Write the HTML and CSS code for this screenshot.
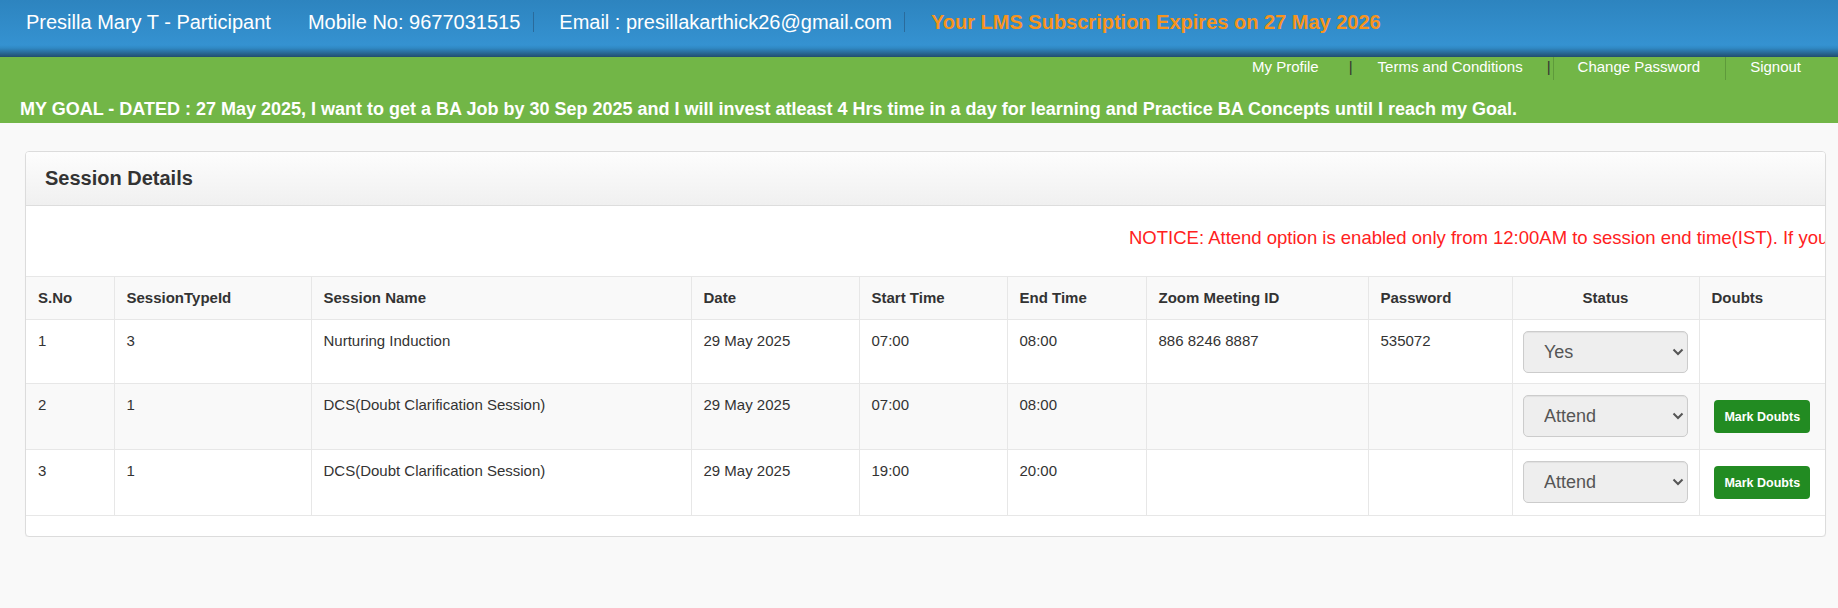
FILE: index.html
```html
<!DOCTYPE html>
<html lang="en">
<head>
<meta charset="utf-8">
<title>Session Details</title>
<link rel="stylesheet" href="styles.css">
</head>
<body>
<header class="topbar">
  <span class="tb-name">Presilla Mary T - Participant</span>
  <span class="tb-item tb-mobile">Mobile No: 9677031515</span>
  <span class="tb-item tb-email">Email : presillakarthick26@gmail.com</span>
  <span class="tb-expiry">Your LMS Subscription Expires on 27 May 2026</span>
</header>

<div class="greenbar">
  <nav class="links">
    <a class="link link-profile" href="#">My Profile</a>
    <span class="bar bar-1">|</span>
    <a class="link link-terms" href="#">Terms and Conditions</a>
    <span class="bar bar-2">|</span>
    <span class="vline vline-1"></span>
    <a class="link link-pass" href="#">Change Password</a>
    <span class="vline vline-2"></span>
    <a class="link" href="#">Signout</a>
  </nav>
  <p class="goal">MY GOAL - DATED : 27 May 2025, I want to get a BA Job by 30 Sep 2025 and I will invest atleast 4 Hrs time in a day for learning and Practice BA Concepts until I reach my Goal.</p>
</div>

<main class="content">
  <section class="panel">
    <div class="panel-heading">Session Details</div>
    <div class="panel-body">
      <div class="notice"><span class="notice-text">NOTICE: Attend option is enabled only from 12:00AM to session end time(IST). If you miss to mark the attendance, please contact the support team.</span></div>
      <table class="sessions">
        <colgroup>
          <col class="c-sno"><col class="c-type"><col class="c-name"><col class="c-date"><col class="c-start"><col class="c-end"><col class="c-zoom"><col class="c-pass"><col class="c-status"><col class="c-doubts">
        </colgroup>
        <thead>
          <tr>
            <th>S.No</th><th>SessionTypeId</th><th>Session Name</th><th>Date</th><th>Start Time</th><th>End Time</th><th>Zoom Meeting ID</th><th>Password</th><th class="th-center">Status</th><th>Doubts</th>
          </tr>
        </thead>
        <tbody>
          <tr>
            <td>1</td><td>3</td><td>Nurturing Induction</td><td>29 May 2025</td><td>07:00</td><td>08:00</td><td>886 8246 8887</td><td>535072</td>
            <td class="td-status"><span class="selwrap"><select class="status-select"><option>Yes</option><option>No</option></select><svg class="chev" width="12" height="8" viewBox="0 0 12 8"><polyline points="1.5,1.5 6,6 10.5,1.5" fill="none" stroke="#555" stroke-width="2"/></svg></span></td>
            <td class="td-doubts"></td>
          </tr>
          <tr class="alt">
            <td>2</td><td>1</td><td>DCS(Doubt Clarification Session)</td><td>29 May 2025</td><td>07:00</td><td>08:00</td><td></td><td></td>
            <td class="td-status"><span class="selwrap"><select class="status-select"><option>Attend</option><option>Yes</option></select><svg class="chev" width="12" height="8" viewBox="0 0 12 8"><polyline points="1.5,1.5 6,6 10.5,1.5" fill="none" stroke="#555" stroke-width="2"/></svg></span></td>
            <td class="td-doubts"><button class="btn-doubts" type="button">Mark Doubts</button></td>
          </tr>
          <tr>
            <td>3</td><td>1</td><td>DCS(Doubt Clarification Session)</td><td>29 May 2025</td><td>19:00</td><td>20:00</td><td></td><td></td>
            <td class="td-status"><span class="selwrap"><select class="status-select"><option>Attend</option><option>Yes</option></select><svg class="chev" width="12" height="8" viewBox="0 0 12 8"><polyline points="1.5,1.5 6,6 10.5,1.5" fill="none" stroke="#555" stroke-width="2"/></svg></span></td>
            <td class="td-doubts"><button class="btn-doubts" type="button">Mark Doubts</button></td>
          </tr>
        </tbody>
      </table>
    </div>
  </section>
</main>
</body>
</html>
```

FILE: styles.css
```css
* { box-sizing: border-box; }

html, body {
  margin: 0;
  padding: 0;
}

body {
  background: #f9f9f9;
  font-family: "Liberation Sans", Arial, Helvetica, sans-serif;
  color: #333;
  width: 1838px;
  overflow: hidden;
}

/* ---------- top blue bar ---------- */
.topbar {
  height: 57px;
  padding: 12px 0 0 26px;
  display: flex;
  align-items: flex-start;
  background: linear-gradient(to bottom, #2d84bf 0px, #3592d1 45px, #3089c4 48px, #2a6f9f 52px, #214d6e 57px);
  color: #fff;
  font-size: 20px;
  line-height: 20px;
  white-space: nowrap;
}

.tb-name { margin-right: 37px; }

.tb-item {
  padding-right: 13px;
  border-right: 1px solid #2a6b9c;
}

.tb-email { margin-left: 25px; padding-right: 12px; }

.tb-expiry {
  margin-left: 26px;
  color: #f7941d;
  font-weight: bold;
}

/* ---------- green bar ---------- */
.greenbar {
  background: #72b647;
  height: 66px;
  color: #fff;
}

.links {
  display: flex;
  justify-content: flex-end;
  align-items: flex-start;
  height: 22px;
  padding-right: 37px;
  font-size: 15px;
  line-height: 20px;
}

.link {
  color: #fff;
  text-decoration: none;
}

.link-profile { margin-right: 30px; }
.link-terms { margin-right: 24px; }
.link-pass { margin-right: 25px; }

.bar {
  color: #333;
  font-size: 15px;
  line-height: 20px;
}

.bar-1 { margin-right: 25px; }
.bar-2 { margin-right: 2px; }

.vline {
  width: 1px;
  height: 23px;
  background: #5e9a3b;
}

.vline-1 { margin-right: 24px; }
.vline-2 { margin-right: 24px; }

.goal {
  margin: 20px 0 0 0;
  padding-left: 20px;
  font-size: 18px;
  line-height: 21px;
  font-weight: bold;
  white-space: nowrap;
}

/* ---------- panel ---------- */
.content {
  padding: 28px 12px 0 25px;
}

.panel {
  background: #fff;
  border: 1px solid #dcdcdc;
  border-radius: 4px;
  box-shadow: 0 1px 1px rgba(0, 0, 0, 0.04);
  overflow: hidden;
}

.panel-heading {
  padding: 15px 19px 15px;
  font-size: 20px;
  line-height: 23px;
  font-weight: bold;
  color: #333;
  background: linear-gradient(to bottom, #fdfdfd 0%, #f0f0f0 100%);
  border-bottom: 1px solid #dddddd;
}

.panel-body {
  padding-bottom: 20px;
  overflow: hidden;
}

.notice {
  padding: 20px 0 27px 0;
  white-space: nowrap;
  overflow: hidden;
  font-size: 18.5px;
  line-height: 23px;
  color: #ff2121;
}

.notice-text { margin-left: 1103px; }

/* ---------- table ---------- */
.sessions {
  width: 100%;
  table-layout: fixed;
  border-collapse: collapse;
  font-size: 15px;
  line-height: 20px;
  color: #333;
}

.c-sno { width: 88px; }
.c-type { width: 197px; }
.c-name { width: 380px; }
.c-date { width: 168px; }
.c-start { width: 148px; }
.c-end { width: 139px; }
.c-zoom { width: 222px; }
.c-pass { width: 144px; }
.c-status { width: 187px; }
.c-doubts { width: 126px; }

.sessions th,
.sessions td {
  border: 1px solid #e7e7e7;
  text-align: left;
  vertical-align: top;
}

.sessions tr > :first-child { border-left: none; }
.sessions tr > :last-child { border-right: none; }

.sessions th {
  padding: 11px 12px;
  background: #f9f9f9;
  font-weight: bold;
}

.sessions .th-center { text-align: center; }

.sessions td {
  padding: 11px 12px;
  background: #fff;
}

.sessions tr.alt td { background: #f9f9f9; }

.sessions td.td-status {
  padding: 11px 0 10px;
}

.sessions td.td-doubts {
  padding: 10px 0;
}

.selwrap {
  position: relative;
  display: block;
  width: 165px;
  margin: 0 auto;
}

.status-select {
  display: block;
  width: 165px;
  height: 42px;
  margin: 0;
  padding: 0 0 0 20px;
  -webkit-appearance: none;
  appearance: none;
  border: 1px solid #cccccc;
  border-radius: 5px;
  background: #eeeeee;
  box-shadow: inset 0 1px 1px rgba(0, 0, 0, 0.06);
  font-family: "Liberation Sans", Arial, Helvetica, sans-serif;
  font-size: 18px;
  color: #555;
}

.chev {
  position: absolute;
  right: 4px;
  top: 17px;
}

.btn-doubts {
  display: block;
  width: 96px;
  height: 33px;
  margin: 6px auto 6px;
  padding: 0;
  border: none;
  border-radius: 4px;
  background: #228b22;
  color: #fff;
  font-family: "Liberation Sans", Arial, Helvetica, sans-serif;
  font-size: 12.5px;
  font-weight: bold;
}
```
